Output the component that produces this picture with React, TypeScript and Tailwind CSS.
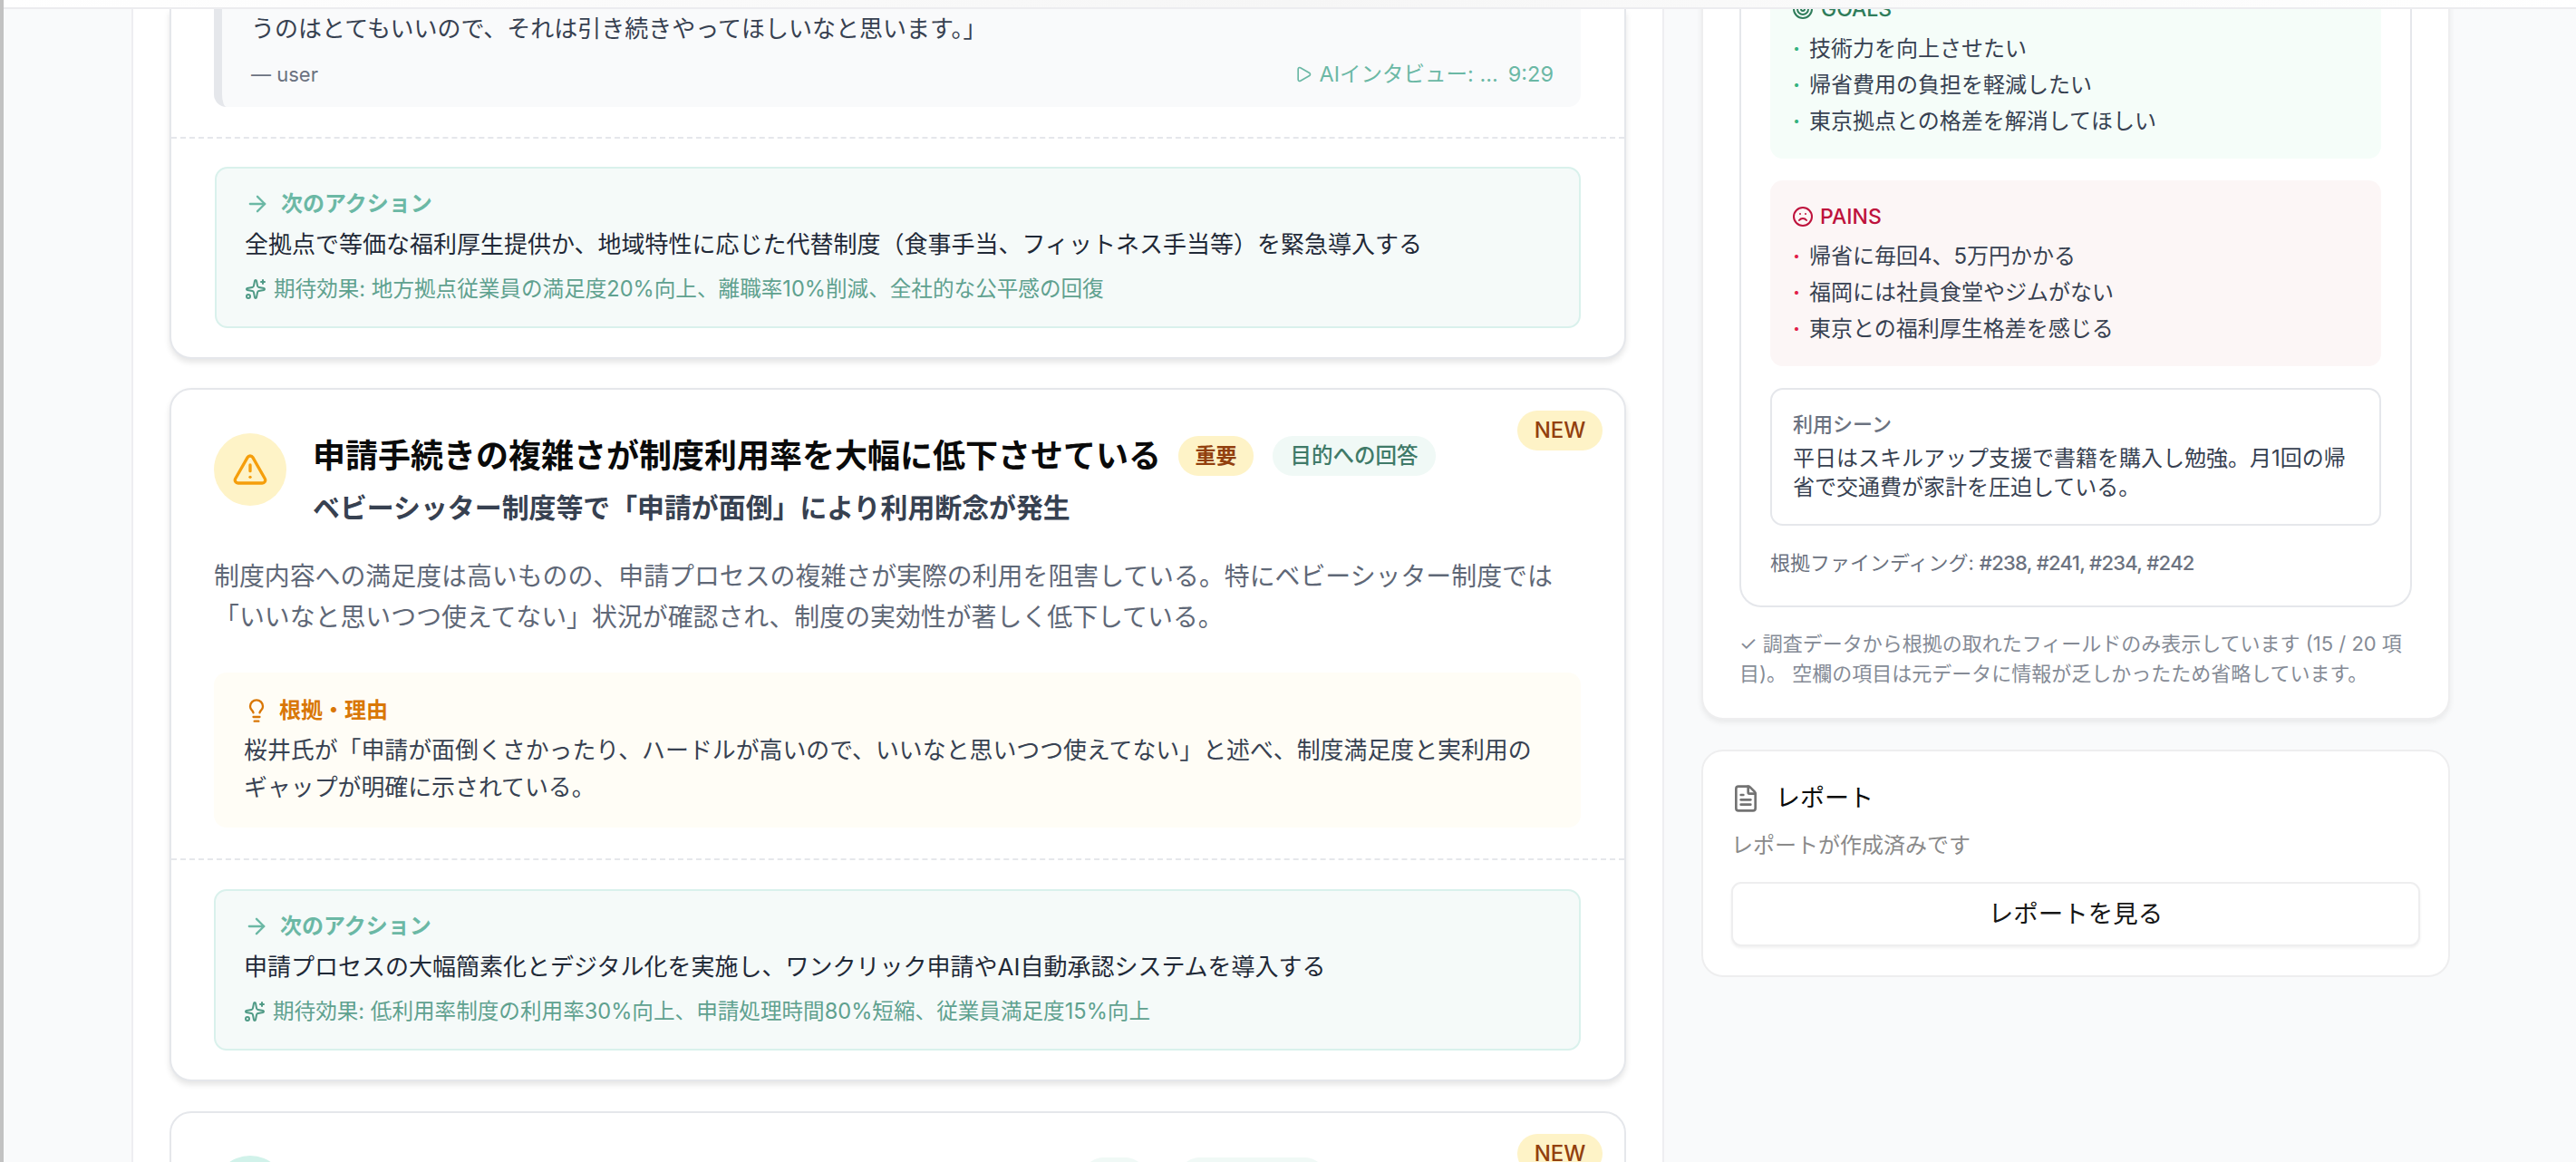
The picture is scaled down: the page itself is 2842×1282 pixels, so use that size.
import { ArrowRight, FileText, Frown, Lightbulb, Play, Sparkles, Target, TriangleAlert } from "lucide-react";

const NewBadge = () => (
  <span className="absolute top-[23px] right-[24px] h-[44px] w-[94px] rounded-full bg-[#fef3c7] text-[#92400e] text-[24px] font-medium flex items-center justify-center">
    NEW
  </span>
);

const NextAction = ({ text, effect }: { text: string; effect: string }) => (
  <div className="rounded-[14px] border-2 border-[#d9f1ec] bg-[#f5faf9] pl-[31px] pt-[25px] pb-[25px] pr-[31px]">
    <div className="flex items-center gap-[12px] h-[28px] text-[#6bb8a5] text-[24px] font-semibold">
      <ArrowRight size={28} strokeWidth={2} />
      <span>次のアクション</span>
    </div>
    <p className="mt-[11px] text-[26px] leading-[40px] text-[#1f2937]">{text}</p>
    <div className="mt-[13px] flex items-center gap-[8px] h-[32px] text-[23.6px] text-[#5fa18f]">
      <Sparkles size={24} strokeWidth={2} className="text-[#4f9a86]" />
      <span>{effect}</span>
    </div>
  </div>
);

const Bullets = ({ items, color }: { items: string[]; color: string }) => (
  <ul className="mt-[8px]">
    {items.map((item) => (
      <li key={item} className="flex items-center h-[40px] text-[24px] text-[#374151]">
        <span className={`w-[19px] pl-[1px] font-bold ${color}`}>·</span>
        <span>{item}</span>
      </li>
    ))}
  </ul>
);

export default function App() {
  return (
    <div className="h-[1282px] overflow-hidden flex bg-[#f9fafb] font-[Inter,'Noto_Sans_CJK_JP',sans-serif]">
      <div className="w-[4px] shrink-0 bg-[#c2c2c2]" />
      <div className="flex-1 flex flex-col min-w-0">
        {/* scrolled page, only the top edge of the header is left */}
        <div className="h-[10px] shrink-0 border-b-2 border-[#ececef] bg-linear-to-r from-white via-[#f6f6f6] to-white" />
        <div className="flex-1 min-h-0 overflow-hidden flex pl-[141px] gap-[41px]">
          <main className="w-[1691px] shrink-0 bg-white border-x-2 border-[#eeeef1] px-[40px]">
            {/* Card 1 */}
            <section className="relative bg-white border-x-2 border-b-2 border-[#e5e7eb] rounded-b-[24px] shadow-[0_4px_6px_rgba(0,0,0,0.1)]">
              <div className="pl-[47px] pr-[48px] pb-[33px]">
                <div className="border-l-[9px] border-[#e5e7eb] bg-[#f9fafb] rounded-b-[14px] pl-[32px] pr-[30px] h-[108px]">
                  <p className="pt-[2px] text-[26px] leading-[40px] text-[#374151]">
                    うのはとてもいいので、それは引き続きやってほしいなと思います。」
                  </p>
                  <div className="mt-[10px] flex items-center justify-between h-[40px]">
                    <span className="text-[22px] text-[#6b7280]">— user</span>
                    <span className="flex items-center text-[23.5px] text-[#6bb8a5]">
                      <Play size={20} strokeWidth={2} />
                      <span className="ml-[8px] whitespace-nowrap">AIインタビュー: ...</span>
                      <span className="ml-[11px]">9:29</span>
                    </span>
                  </div>
                </div>
              </div>
              <div className="border-t-2 border-dashed border-[#e5e7eb] pl-[48px] pr-[48px] pt-[31px] pb-[32px]">
                <NextAction
                  text="全拠点で等価な福利厚生提供か、地域特性に応じた代替制度（食事手当、フィットネス手当等）を緊急導入する"
                  effect="期待効果: 地方拠点従業員の満足度20%向上、離職率10%削減、全社的な公平感の回復"
                />
              </div>
            </section>

            {/* Card 2 */}
            <section className="relative mt-[32px] bg-white border-2 border-[#e5e7eb] rounded-[24px] shadow-[0_4px_6px_rgba(0,0,0,0.1)]">
              <NewBadge />
              <div className="pl-[47px] pr-[48px] pt-[48px] pb-[34px]">
                <div className="flex gap-[29px]">
                  <div className="w-[80px] h-[80px] shrink-0 rounded-full bg-[#fef3c7] flex items-center justify-center">
                    <TriangleAlert size={40} strokeWidth={2} className="text-[#f59e0b]" />
                  </div>
                  <div className="pt-[3px]">
                    <div className="flex items-center h-[44px]">
                      <h3 className="text-[36px] font-bold text-[#0a0a0a]">申請手続きの複雑さが制度利用率を大幅に低下させている</h3>
                      <span className="ml-[19px] h-[44px] w-[83px] rounded-full bg-[#fef3c7] text-[#92400e] text-[23px] font-semibold flex items-center justify-center">重要</span>
                      <span className="ml-[21px] h-[44px] w-[180px] rounded-full bg-[#f0f9f6] text-[#3f7a68] text-[23.5px] font-medium flex items-center justify-center">目的への回答</span>
                    </div>
                    <p className="mt-[19px] text-[29.9px] leading-[32px] font-semibold text-[#374151]">
                      ベビーシッター制度等で「申請が面倒」により利用断念が発生
                    </p>
                  </div>
                </div>
                <p className="mt-[38px] text-[27.9px] leading-[45px] text-[#5f6877]">
                  制度内容への満足度は高いものの、申請プロセスの複雑さが実際の利用を阻害している。特にベビーシッター制度では「いいなと思いつつ使えてない」状況が確認され、制度の実効性が著しく低下している。
                </p>
                <div className="mt-[38px] rounded-[14px] bg-[#fffdf6] pl-[33px] pr-[33px] pt-[26px] pb-[24px]">
                  <div className="flex items-center gap-[11px] h-[32px] text-[24px] font-semibold text-[#d97706]">
                    <Lightbulb size={28} strokeWidth={2} />
                    <span>根拠・理由</span>
                  </div>
                  <p className="mt-[7px] text-[25.9px] leading-[41px] text-[#374151]">
                    桜井氏が「申請が面倒くさかったり、ハードルが高いので、いいなと思いつつ使えてない」と述べ、制度満足度と実利用のギャップが明確に示されている。
                  </p>
                </div>
              </div>
              <div className="border-t-2 border-dashed border-[#e5e7eb] pl-[47px] pr-[48px] pt-[32px] pb-[32px]">
                <NextAction
                  text="申請プロセスの大幅簡素化とデジタル化を実施し、ワンクリック申請やAI自動承認システムを導入する"
                  effect="期待効果: 低利用率制度の利用率30%向上、申請処理時間80%短縮、従業員満足度15%向上"
                />
              </div>
            </section>

            {/* Card 3, only the top is in view */}
            <section className="relative mt-[33px] bg-white border-2 border-[#e5e7eb] rounded-[24px] h-[200px]">
              <NewBadge />
              <div className="pl-[47px] pt-[47px] flex">
                <div className="w-[80px] h-[80px] rounded-full bg-[#d1f2ea]" />
                <span className="ml-[879px] mt-[2px] w-[69px] h-[44px] rounded-full bg-[#f0f9f6]" />
                <span className="ml-[37px] mt-[2px] w-[161px] h-[44px] rounded-full bg-[#f0f9f6]" />
              </div>
            </section>
          </main>

          <aside className="w-[826px] shrink-0">
            <div className="bg-white border-x-2 border-b-2 border-[#eeeeef] rounded-b-[24px] shadow-[0_3px_6px_rgba(0,0,0,0.07)] px-[40px] pb-[32px]">
              <div className="border-x-2 border-b-2 border-[#e5e7eb] rounded-b-[24px] px-[32px] pb-[31px]">
                <div className="bg-[#f5fdf9] rounded-b-[14px] pl-[24px] pr-[24px] pb-[21px]">
                  <div className="-mt-[16px] h-[32px] flex items-center gap-[8px] text-[#2f7d5b] text-[23px] font-medium">
                    <Target size={24} strokeWidth={2} />
                    <span>GOALS</span>
                  </div>
                  <Bullets color="text-[#34b37e]" items={["技術力を向上させたい", "帰省費用の負担を軽減したい", "東京拠点との格差を解消してほしい"]} />
                </div>
                <div className="mt-[24px] bg-[#fcf6f6] rounded-[14px] pl-[24px] pr-[24px] pt-[24px] pb-[21px]">
                  <div className="h-[32px] flex items-center gap-[7px] text-[#be123c] text-[23px] font-medium">
                    <Frown size={24} strokeWidth={2} />
                    <span>PAINS</span>
                  </div>
                  <Bullets color="text-[#e11d48]" items={["帰省に毎回4、5万円かかる", "福岡には社員食堂やジムがない", "東京との福利厚生格差を感じる"]} />
                </div>
                <div className="mt-[24px] bg-white border-2 border-[#e5e7eb] rounded-[14px] px-[23px] pt-[24px] pb-[24px]">
                  <div className="h-[28px] flex items-center text-[22px] font-medium text-[#6b7280]">利用シーン</div>
                  <p className="mt-[8px] text-[24px] leading-[32px] text-[#374151]">
                    平日はスキルアップ支援で書籍を購入し勉強。月1回の帰省で交通費が家計を圧迫している。
                  </p>
                </div>
                <p className="mt-[25px] h-[32px] flex items-center text-[22px] text-[#6b7280]">
                  根拠ファインディング:
                  <span className="ml-[6px] tracking-[-0.7px] font-medium">#238, #241, #234, #242</span>
                </p>
              </div>
              <p className="mt-[24px] text-[22px] leading-[33px] text-[#858b96]">
                ✓ 調査データから根拠の取れたフィールドのみ表示しています (15 / 20 項目)。 空欄の項目は元データに情報が乏しかったため省略しています。
              </p>
            </div>

            <div className="mt-[33px] bg-white border-2 border-[#eeeeef] rounded-[24px] px-[31px] pt-[32px] pb-[32px]">
              <div className="flex items-center gap-[17px] h-[40px]">
                <FileText size={32} strokeWidth={2} className="text-[#737373]" />
                <span className="text-[27px] text-[#0a0a0a]">レポート</span>
              </div>
              <p className="mt-[16px] h-[32px] flex items-center text-[24px] text-[#8a8a8a]">レポートが作成済みです</p>
              <button className="mt-[24px] w-full h-[71px] rounded-[11px] border-2 border-[#eeeeef] bg-white shadow-[0_2px_3px_rgba(0,0,0,0.06)] text-[27.5px] text-[#171717]">
                レポートを見る
              </button>
            </div>
          </aside>
        </div>
      </div>
    </div>
  );
}
